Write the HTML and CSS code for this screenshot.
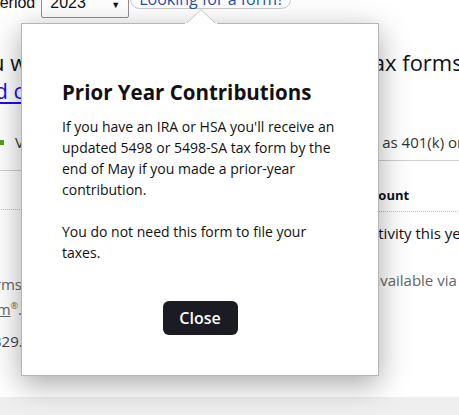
FILE: index.html
```html
<!DOCTYPE html>
<html lang="en">
<head>
<meta charset="utf-8">
<title>Tax forms</title>
<link rel="stylesheet" href="styles.css">
</head>
<body>
<div class="viewport">
  <main class="page">
    <div class="filters">
      <span class="filter-label">Period</span>
      <div class="select"><span>2023</span><span class="caret">&#9660;</span></div>
      <a class="form-link" href="#">Looking for a form?</a>
    </div>
    <h1 class="title">Did you want to see all of your yearly 2023 tax forms?</h1>
    <a class="title-link" href="#">Find consolidated forms</a>
    <div class="legend">
      <span class="dot"></span>
      <span class="legend-text">View forms for former workplace savings plans such as 401(k) or 403(b)</span>
    </div>
    <div class="lower">
      <div class="side">
        <div class="side-rule"></div>
        <div class="side-dots"></div>
        <p class="side-note">Some accounts have forms<br>only on <a href="#">Fidelity.com</a><sup>&reg;</sup>.</p>
        <p class="side-num">$1,329.10</p>
      </div>
      <div class="main-col">
        <div class="main-rule"></div>
        <div class="table-head">
          <span class="col-name">Form</span>
          <span class="col-acct">Account</span>
        </div>
        <p class="row-text">There was no reportable tax activity this year</p>
        <p class="note">Tax forms for some brokerage accounts are available via Fidelity.com</p>
      </div>
    </div>
  </main>
  <div class="footer-band"></div>

  <div class="modal" role="dialog">
    <svg class="modal-arrow" width="32" height="15" viewBox="0 0 32 15"><polygon points="1,15 16,0.7 31,15" fill="#fff" stroke="#c4c4c4" stroke-width="1"/><rect x="0" y="14" width="32" height="2" fill="#fff"/></svg>
    <h2 class="modal-title">Prior Year Contributions</h2>
    <p class="modal-text">If you have an IRA or HSA you'll receive an updated 5498 or 5498-SA tax form by the end of May if you made a prior-year contribution.</p>
    <p class="modal-text">You do not need this form to file your taxes.</p>
    <div class="modal-actions"><button class="btn-close" type="button">Close</button></div>
  </div>
</div>
</body>
</html>
```
FILE: styles.css
```css
* { box-sizing: border-box; }
html, body { margin: 0; padding: 0; }
body {
  width: 459px;
  height: 415px;
  overflow: hidden;
  background: #fff;
  font-family: "Open Sans", "Noto Sans", sans-serif;
  color: #111;
}
.viewport {
  position: relative;
  width: 459px;
  height: 415px;
  overflow: hidden;
}
.page {
  display: flex;
  flex-direction: column;
  width: 900px;
  margin-top: -10px;
}
.filters {
  display: flex;
  align-items: flex-start;
  height: 28px;
  margin-left: -11px;
}
.filter-label {
  font-family: "Liberation Sans", Arial, sans-serif;
  font-size: 16px;
  line-height: 16px;
  padding-top: 5px;
  margin-right: 6px;
}
.select {
  display: flex;
  justify-content: space-between;
  align-items: flex-start;
  width: 88px;
  height: 28px;
  border: 1px solid #8f8f8f;
  border-radius: 2px;
  padding: 4px 8px 0 8px;
  font-family: "Liberation Sans", Arial, sans-serif;
  font-size: 16px;
  line-height: 16px;
}
.caret { font-size: 9px; padding-top: 2px; }
.form-link {
  margin-left: 1px;
  height: 19px;
  border: 1px solid #c8c8c8;
  border-radius: 10px;
  color: #1e4fb5;
  text-decoration: none;
  font-size: 16px;
  line-height: 16px;
  white-space: nowrap;
  padding: 0 6px 0 8px;
}
.title {
  margin: 30px 0 0 -74px;
  font-size: 22px;
  font-weight: 400;
  line-height: 28px;
  white-space: nowrap;
}
.title-link {
  margin-left: -36px;
  font-size: 22px;
  line-height: 28px;
  color: #1a0dee;
  text-decoration: underline;
  text-underline-offset: 3px;
  align-self: flex-start;
  white-space: nowrap;
}
.legend {
  display: flex;
  align-items: center;
  gap: 11px;
  margin-top: 28px;
  font-size: 15px;
  line-height: 20px;
  color: #333;
  white-space: nowrap;
}
.dot { width: 4px; height: 5px; background: #5b9a2a; }
.lower {
  display: grid;
  grid-template-columns: 200px 1fr;
  column-gap: 18px;
  margin-left: -178px;
}
.side { display: flex; flex-direction: column; }
.side-rule { height: 1px; background: #cfcfcf; margin-top: 18px; }
.side-dots { height: 1px; border-top: 1px dotted #bdbdbd; margin-top: 38px; }
.side-note {
  margin: 64px 0 0 0;
  font-size: 15px;
  line-height: 21px;
  color: #666;
  text-align: right;
  white-space: nowrap;
}
.side-note a { color: #666; }
.side-note sup { font-size: 9px; }
.side-num { margin: 11px 0 0 150px; font-size: 15px; color: #444; white-space: nowrap; }
.main-col { display: flex; flex-direction: column; }
.main-rule { height: 1px; background: #cfcfcf; margin-top: 8px; }
.table-head {
  display: flex;
  padding: 25px 0 7px 0;
  font-size: 13px;
  line-height: 18px;
  font-weight: 700;
  border-bottom: 1px dotted #bdbdbd;
}
.col-name { width: 316px; }
.row-text { margin: 11px 0 0 122px; font-size: 15px; line-height: 20px; white-space: nowrap; }
.note { margin: 27px 0 0 23px; font-size: 15px; line-height: 20px; color: #666; white-space: nowrap; }

.footer-band {
  position: absolute;
  left: 0; right: 0; bottom: 0;
  height: 18px;
  background: #efefef;
}

.modal {
  position: absolute;
  left: 21px;
  top: 23px;
  width: 358px;
  height: 353px;
  background: #fff;
  border: 1px solid #b5b5b5;
  box-shadow: 0 8px 28px rgba(0,0,0,0.35);
  padding: 55px 40px 0 40px;
  display: flex;
  flex-direction: column;
}
.modal-arrow {
  position: absolute;
  left: 163px;
  top: -15px;
}
.modal-title {
  margin: 0 0 11px 0;
  font-size: 20.5px;
  font-weight: 700;
  line-height: 26px;
  color: #111;
}
.modal-text {
  margin: 0 0 21px 0;
  font-size: 14px;
  line-height: 21px;
  color: #111;
}
.modal-actions {
  display: flex;
  justify-content: center;
  margin-top: 17px;
}
.btn-close {
  width: 75px;
  height: 34px;
  border: 0;
  border-radius: 6px;
  background: #1b1b24;
  color: #fff;
  font-family: "Open Sans", sans-serif;
  font-size: 16px;
  font-weight: 600;
}
```
